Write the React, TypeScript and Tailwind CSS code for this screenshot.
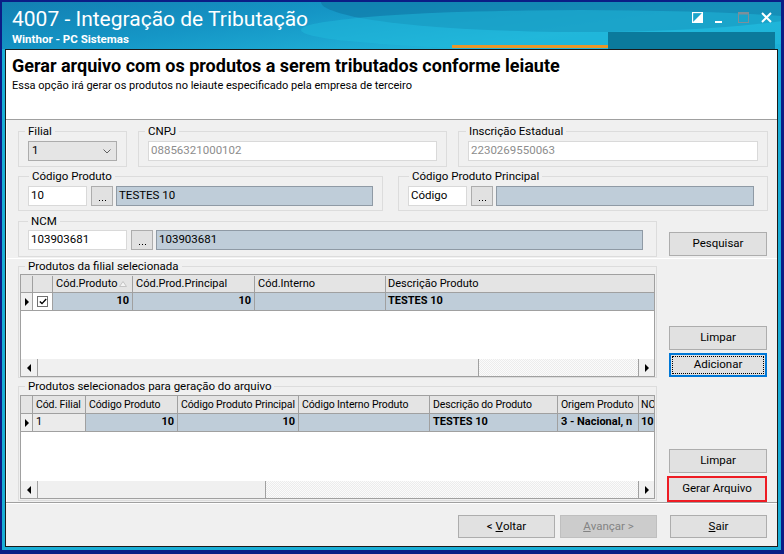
import React from "react";

type GroupProps = { className: string; legendClass: string; label: string; children?: React.ReactNode };

function Group({ className, legendClass, label, children }: GroupProps) {
  return (
    <fieldset className={`border border-[#dcdcdc] min-w-0 ${className}`}>
      <legend className={`px-[3px] text-[11.5px] leading-[14px] text-black ${legendClass}`}>{label}</legend>
      {children}
    </fieldset>
  );
}

function Input({ className, text, muted }: { className: string; text: string; muted?: boolean }) {
  return (
    <div
      className={`h-[20px] bg-white border border-[#d9d9d9] flex items-center pl-[2px] text-[11.5px] whitespace-nowrap overflow-hidden ${
        muted ? "text-[#8d8d8d]" : "text-black"
      } ${className}`}
    >
      {text}
    </div>
  );
}

function Dots({ className }: { className: string }) {
  return (
    <div className={`w-[22px] h-[20px] bg-[#e1e1e1] border border-[#adadad] flex items-end justify-center pb-[4px] ${className}`}>
      <div className="flex gap-[2px]">
        <span className="w-[1px] h-[1px] bg-black" />
        <span className="w-[1px] h-[1px] bg-black" />
        <span className="w-[1px] h-[1px] bg-black" />
      </div>
    </div>
  );
}

function Desc({ className, text }: { className: string; text?: string }) {
  return (
    <div className={`h-[20px] bg-[#bfcdd9] border border-[#8f9aa5] flex items-center pl-[2px] text-[11.5px] ${className}`}>
      {text}
    </div>
  );
}

function Btn({ className, children }: { className: string; children: React.ReactNode }) {
  return (
    <div className={`bg-[#e1e1e1] border border-[#adadad] flex items-center justify-center text-[11.5px] text-black ${className}`}>
      {children}
    </div>
  );
}

function RowPointer() {
  return (
    <svg width="4" height="8" viewBox="0 0 4 8">
      <polygon points="0,0 4,4 0,8" fill="#000" />
    </svg>
  );
}

function HScroll({ thumbClass }: { thumbClass: string }) {
  return (
    <div className="h-[17px] flex bg-[#f0f0f0]">
      <div className="w-[17px] border-r border-[#a0a0a0] flex items-center justify-center">
        <svg width="4" height="8" viewBox="0 0 4 8">
          <polygon points="4,0 0,4 4,8" fill="#000" />
        </svg>
      </div>
      <div className={`bg-[#f0f0f0] border-r border-[#a0a0a0] ${thumbClass}`} />
      <div className="flex-1 bg-[repeating-conic-gradient(#fbfbfb_0%_25%,#ececec_0%_50%)] bg-[length:2px_2px]" />
      <div className="w-[16px] border-l border-[#a0a0a0] bg-[#f0f0f0] flex items-center justify-center">
        <svg width="4" height="8" viewBox="0 0 4 8">
          <polygon points="0,0 4,4 0,8" fill="#000" />
        </svg>
      </div>
    </div>
  );
}

function TitleBar() {
  return (
    <div className="relative h-[47px] bg-[linear-gradient(172deg,#137fb2_0%,#1596c6_35%,#22b4d9_70%,#1aaed6_100%)] text-white overflow-hidden">
      <div className="absolute right-[-60px] top-[-30px] w-[520px] h-[60px] rounded-[50%] bg-[#0f77a3] opacity-60" />
      <div className="absolute right-[-80px] top-[8px] w-[560px] h-[40px] rounded-[50%] bg-[#1fb9dc] opacity-50" />
      <div className="relative pl-[10px] pt-[5px] text-[21px] leading-[25px]">4007 - Integração de Tributação</div>
      <div className="relative pl-[10px] pt-[1px] text-[11.5px] leading-[13px] font-bold">Winthor - PC Sistemas</div>
      <div className="absolute left-[450px] top-[43px] w-[156px] h-[3px] bg-[#e9962a]" />
      <div className="absolute left-[606px] top-[30px] w-[167px] h-[17px] bg-[#0b7a9c]" />
      <div className="absolute top-[10px] right-[9px] flex gap-[12px]">
        <svg width="11" height="11" viewBox="0 0 11 11">
          <rect x="0.5" y="0.5" width="10" height="10" fill="none" stroke="#fff" strokeWidth="1.3" />
          <polygon points="0,11 11,0 11,11" fill="#fff" />
        </svg>
        <svg width="11" height="11" viewBox="0 0 11 11">
          <rect x="0" y="9" width="7" height="2" fill="#fff" />
        </svg>
        <svg width="11" height="11" viewBox="0 0 11 11">
          <rect x="0.5" y="0.5" width="10" height="10" fill="none" stroke="#7d8f9a" strokeWidth="1" />
          <rect x="0" y="0" width="11" height="2.5" fill="#7d8f9a" />
        </svg>
        <svg width="11" height="11" viewBox="0 0 11 11">
          <path d="M1 1 L10 10 M10 1 L1 10" stroke="#fff" strokeWidth="2" />
        </svg>
      </div>
    </div>
  );
}

function Grid1() {
  const hc = "h-full border-r border-[#a0a0a0] px-[3px] flex items-center overflow-hidden whitespace-nowrap";
  return (
    <div className="h-[103px] border border-[#a0a0a0] bg-white flex flex-col text-[11px]">
      <div className="h-[18px] flex border-b border-[#a0a0a0] bg-[#e4e4e4] pt-[1px]">
        <div className={`w-[12px] ${hc}`} />
        <div className={`w-[20px] ${hc}`} />
        <div className={`w-[80px] ${hc} justify-between pr-[5px]`}>
          <span className="w-[62px] overflow-hidden">Cód.Produto</span>
          <svg width="8" height="6" viewBox="0 0 8 6">
            <polygon points="4,0.5 7.5,5.5 0.5,5.5" fill="#f4f4f4" stroke="#c4c4c4" strokeWidth="1" />
          </svg>
        </div>
        <div className={`w-[122px] ${hc}`}>Cód.Prod.Principal</div>
        <div className={`w-[131px] ${hc}`}>Cód.Interno</div>
        <div className="flex-1 h-full px-[2px] flex items-center whitespace-nowrap overflow-hidden">Descrição Produto</div>
      </div>
      <div className="h-[18px] flex border-b border-[#a0a0a0] font-bold">
        <div className={`w-[12px] ${hc} bg-[#f0f0f0] justify-center`}>
          <RowPointer />
        </div>
        <div className={`w-[20px] ${hc} bg-white justify-center`}>
          <div className="w-[11px] h-[11px] border border-[#707070] bg-white flex items-center justify-center">
            <svg width="8" height="7" viewBox="0 0 8 7">
              <path d="M0.8 3.4 L3 5.6 L7.2 1" fill="none" stroke="#000" strokeWidth="1.4" />
            </svg>
          </div>
        </div>
        <div className={`w-[80px] ${hc} bg-[#bfcdd9] justify-end`}>10</div>
        <div className={`w-[122px] ${hc} bg-[#bfcdd9] justify-end`}>10</div>
        <div className={`w-[131px] ${hc} bg-[#bfcdd9]`} />
        <div className="flex-1 h-full bg-[#bfcdd9] px-[2px] flex items-center">TESTES 10</div>
      </div>
      <div className="flex-1" />
      <HScroll thumbClass="w-[441px]" />
    </div>
  );
}

function Grid2() {
  const hc = "h-full border-r border-[#a0a0a0] px-[3px] flex items-center overflow-hidden whitespace-nowrap";
  return (
    <div className="h-[104px] border border-[#a0a0a0] bg-white flex flex-col text-[11px]">
      <div className="h-[18px] flex border-b border-[#a0a0a0] bg-[#e4e4e4] text-[10.5px] tracking-[-0.1px]">
        <div className={`w-[12px] ${hc}`} />
        <div className={`w-[53px] ${hc}`}>Cód. Filial</div>
        <div className={`w-[92px] ${hc}`}>Código Produto</div>
        <div className={`w-[121px] ${hc} px-[2px]`}>Código Produto Principal</div>
        <div className={`w-[131px] ${hc} px-[2px]`}>Código Interno Produto</div>
        <div className={`w-[128px] ${hc}`}>Descrição do Produto</div>
        <div className={`w-[81px] ${hc} px-[2px]`}>Origem Produto</div>
        <div className="flex-1 min-w-0 h-full px-[2px] flex items-center overflow-hidden whitespace-nowrap">NC</div>
      </div>
      <div className="h-[18px] flex border-b border-[#a0a0a0] font-bold">
        <div className={`w-[12px] ${hc} bg-[#f0f0f0] justify-center`}>
          <RowPointer />
        </div>
        <div className={`w-[53px] ${hc} bg-[#ebebeb] font-normal`}>1</div>
        <div className={`w-[92px] ${hc} bg-[#bfcdd9] justify-end`}>10</div>
        <div className={`w-[121px] ${hc} bg-[#bfcdd9] justify-end`}>10</div>
        <div className={`w-[131px] ${hc} bg-[#bfcdd9]`} />
        <div className={`w-[128px] ${hc} bg-[#bfcdd9]`}>TESTES 10</div>
        <div className={`w-[81px] ${hc} bg-[#bfcdd9]`}>3 - Nacional, n</div>
        <div className="flex-1 min-w-0 h-full bg-[#bfcdd9] px-[2px] flex items-center overflow-hidden whitespace-nowrap">10</div>
      </div>
      <div className="flex-1" />
      <HScroll thumbClass="w-[228px]" />
    </div>
  );
}

export default function App() {
  return (
    <div className="w-[784px] h-[554px] bg-[#0b1d86] pl-[2px] pr-[3px] pt-[2px] pb-[4px] font-['Roboto',sans-serif] text-black overflow-hidden">
      <div className="w-full h-full bg-[#1aaed6] flex flex-col">
        <TitleBar />
        <div className="flex-1 px-[3px] pb-[3px] flex flex-col">
          <div className="flex-1 border border-[#1a1a1a] bg-[#f0f0f0] flex flex-col">
            {/* header */}
            <div className="h-[70px] bg-white border-b border-[#a0a0a0] pl-[6px] pt-[6px]">
              <div className="text-[18px] leading-[20px] font-bold">
                Gerar arquivo com os produtos a serem tributados conforme leiaute
              </div>
              <div className="mt-[3px] text-[11px] leading-[13px]">
                Essa opção irá gerar os produtos no leiaute especificado pela empresa de terceiro
              </div>
            </div>

            {/* top panel */}
            <div className="border-l border-b border-white pl-[11px] pt-[4px] pb-[1px] flex flex-col">
              <div className="flex gap-[11px]">
                <Group className="w-[109px] h-[43px]" legendClass="ml-[6px]" label="Filial">
                  <div className="pt-[3px] pl-[9px]">
                    <div className="w-[89px] h-[20px] bg-[#e5e5e5] border border-[#acacac] flex items-center justify-between pl-[3px] pr-[5px] text-[11.5px]">
                      <span>1</span>
                      <svg width="8" height="5" viewBox="0 0 8 5">
                        <path d="M0.5 0.5 L4 4 L7.5 0.5" fill="none" stroke="#606060" strokeWidth="1" />
                      </svg>
                    </div>
                  </div>
                </Group>
                <Group className="w-[309px] h-[43px]" legendClass="ml-[6px]" label="CNPJ">
                  <div className="pt-[3px] pl-[9px]">
                    <Input className="w-[289px]" text="08856321000102" muted />
                  </div>
                </Group>
                <Group className="w-[310px] h-[43px]" legendClass="ml-[7px]" label="Inscrição Estadual">
                  <div className="pt-[3px] pl-[9px]">
                    <Input className="w-[290px]" text="2230269550063" muted />
                  </div>
                </Group>
              </div>

              <div className="mt-[2px] flex gap-[15px]">
                <Group className="w-[365px] h-[42px]" legendClass="ml-[10px]" label="Código Produto">
                  <div className="pt-[3px] pl-[9px] flex">
                    <Input className="w-[59px]" text="10" />
                    <Dots className="ml-[4px]" />
                    <Desc className="ml-[3px] w-[257px]" text="TESTES 10" />
                  </div>
                </Group>
                <Group className="w-[370px] h-[42px]" legendClass="ml-[10px]" label="Código Produto Principal">
                  <div className="pt-[3px] pl-[9px] flex">
                    <Input className="w-[59px]" text="Código" />
                    <Dots className="ml-[4px]" />
                    <Desc className="ml-[3px] w-[258px]" />
                  </div>
                </Group>
              </div>

              <div className="mt-[3px] flex items-end">
                <Group className="w-[639px] h-[43px]" legendClass="ml-[9px]" label="NCM">
                  <div className="pt-[2px] pl-[9px] flex">
                    <Input className="w-[99px]" text="103903681" />
                    <Dots className="ml-[4px]" />
                    <Desc className="ml-[3px] w-[487px]" text="103903681" />
                  </div>
                </Group>
                <Btn className="ml-[12px] w-[98px] h-[24px] mb-[1px]">Pesquisar</Btn>
              </div>
            </div>

            {/* bottom panel */}
            <div className="h-[243px] border-l border-white pl-[11px] flex">
              <div className="w-[639px] flex flex-col">
                <Group className="w-[639px] h-[119px] px-[1px] pt-[1px]" legendClass="ml-[5px]" label="Produtos da filial selecionada">
                  <Grid1 />
                </Group>
                <Group className="mt-[1px] w-[639px] h-[122px] px-[1px] pt-[2px]" legendClass="ml-[5px]" label="Produtos selecionados para geração do arquivo">
                  <Grid2 />
                </Group>
              </div>
              <div className="ml-[12px] w-[98px] flex flex-col">
                <Btn className="mt-[67px] h-[24px]">Limpar</Btn>
                <div className="mt-[3px] h-[24px] border-2 border-[#0078d7] bg-[#e1e1e1] p-[1px]">
                  <div className="h-full border border-dotted border-black flex items-center justify-center text-[11.5px]">
                    Adicionar
                  </div>
                </div>
                <Btn className="mt-[72px] h-[24px]">Limpar</Btn>
                <div className="mt-[3px] -ml-[2px] w-[100px] h-[26px] border-2 border-[#ee1c24] bg-[#e1e1e1] flex items-center justify-center text-[11.5px]">
                  Gerar Arquivo
                </div>
              </div>
            </div>

            {/* separator */}
            <div className="h-[2px] border-t border-[#a0a0a0] border-b border-b-white" />

            {/* bottom bar */}
            <div className="flex-1 flex justify-end items-start pt-[11px] pr-[10px]">
              <Btn className="w-[97px] h-[23px]">
                &lt;&nbsp;<span className="underline">V</span>oltar
              </Btn>
              <div className="ml-[5px] w-[97px] h-[23px] bg-[#cccccc] border border-[#bfbfbf] flex items-center justify-center text-[11.5px] text-[#838383]">
                <span className="underline">A</span>vançar &gt;
              </div>
              <Btn className="ml-[13px] w-[97px] h-[23px]">
                <span className="underline">S</span>air
              </Btn>
            </div>
          </div>
        </div>
      </div>
    </div>
  );
}
